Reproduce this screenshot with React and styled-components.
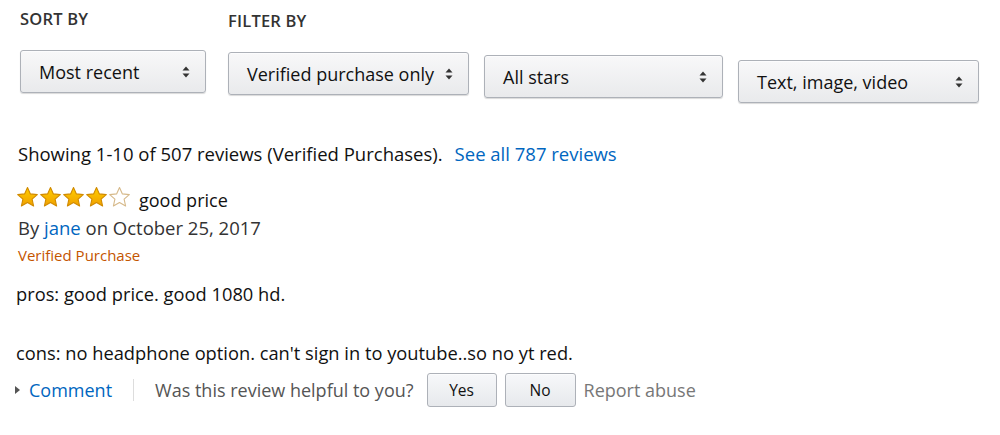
import React from "react";
import styled, { createGlobalStyle } from "styled-components";

const GlobalStyle = createGlobalStyle`
  body {
    margin: 0;
    background: #fff;
    font-family: "Open Sans", "Liberation Sans", sans-serif;
    color: #111;
  }
`;

const SPage = styled.div`
  width: 1000px;
  height: 435px;
  padding: 10px 0 0 18px;
  box-sizing: border-box;
  overflow: hidden;
`;

const SControls = styled.div`
  display: flex;
  align-items: flex-start;
`;

const SGroup = styled.div`
  display: flex;
  flex-direction: column;
  margin-top: ${(props) => props.drop || 0}px;
  margin-left: ${(props) => props.left || 0}px;
`;

const SGroupLabel = styled.div`
  font-size: 16.5px;
  font-weight: 600;
  letter-spacing: 0.2px;
  color: #333;
  height: 18px;
  line-height: 18px;
  margin: 0 0 22px 0;
`;

const SDropRow = styled.div`
  display: flex;
  align-items: flex-start;
  gap: 15px;
`;

const SDropdown = styled.div`
  display: flex;
  align-items: center;
  justify-content: space-between;
  box-sizing: border-box;
  width: ${(props) => props.width}px;
  height: 43px;
  margin-top: ${(props) => props.drop || 0}px;
  padding: 0 15px 0 18px;
  background: linear-gradient(to bottom, #f8f8f9, #e9eaec);
  border: 1px solid #adb1b8;
  border-radius: 3px;
  box-shadow: 0 1px 0 rgba(255, 255, 255, 0.6) inset, 0 1px 1px rgba(0, 0, 0, 0.15);
  font-size: 18px;
  color: #111;
`;

const SArrows = styled.svg`
  width: 8px;
  height: 12px;
  flex: none;
`;

const SummaryLine = styled.div`
  margin-top: 40px;
  font-size: 18.5px;
  line-height: 22px;
  display: flex;
  gap: 12px;
  align-items: baseline;
`;

const SLink = styled.span`
  color: #0066c0;
`;

const SReview = styled.div`
  margin-top: 20px;
`;

const STitleRow = styled.div`
  display: flex;
  align-items: center;
  gap: 8px;
  height: 24px;
  font-size: 18px;
`;

const STitleText = styled.span`
  margin-top: 5px;
`;

const SStars = styled.div`
  display: flex;
  margin-left: -2px;
`;

const SByline = styled.div`
  margin-top: 8px;
  font-size: 18.5px;
  line-height: 22px;
  color: #333;
`;

const SVerified = styled.div`
  margin-top: 7px;
  font-size: 15px;
  line-height: 18px;
  color: #c45500;
`;

const SBody = styled.p`
  margin: ${(props) => props.top}px 0 0 -2px;
  font-size: 18.3px;
  line-height: 22px;
  color: #111;
`;

const SActions = styled.div`
  display: flex;
  align-items: center;
  height: 34px;
  margin-top: 9px;
  font-size: 18px;
  color: #555;
`;

const SCaret = styled.span`
  width: 0;
  height: 0;
  border-left: 5px solid #555;
  border-top: 4px solid transparent;
  border-bottom: 4px solid transparent;
  margin: 0 9px 0 -3px;
`;

const SDivider = styled.span`
  width: 1px;
  height: 22px;
  background: #ddd;
  margin: 0 21px;
`;

const SVoteButton = styled.button`
  box-sizing: border-box;
  width: ${(props) => props.width}px;
  height: 34px;
  margin-left: ${(props) => props.gap}px;
  background: linear-gradient(to bottom, #f7f8fa, #e7e9ec);
  border: 1px solid #adb1b8;
  border-radius: 3px;
  box-shadow: 0 1px 0 rgba(255, 255, 255, 0.6) inset;
  font-family: inherit;
  font-size: 15.5px;
  color: #111;
`;

const SReport = styled.span`
  margin-left: 8px;
  color: #777;
`;

const Arrows = () => (
  <SArrows viewBox="0 0 8 12">
    <path d="M4 0.5 L7.5 4.5 H0.5 Z" fill="#333" />
    <path d="M4 11.5 L7.5 7.5 H0.5 Z" fill="#333" />
  </SArrows>
);

const STAR = "M11 1.5 L13.9 7.9 L20.8 8.6 L15.6 13.2 L17.1 20 L11 16.5 L4.9 20 L6.4 13.2 L1.2 8.6 L8.1 7.9 Z";

const Star = ({ filled }) => (
  <svg width="23" height="22" viewBox="0 0 22 22">
    <defs>
      <linearGradient id="gold" x1="0" y1="0" x2="0" y2="1">
        <stop offset="0" stopColor="#ffce00" />
        <stop offset="1" stopColor="#f0a000" />
      </linearGradient>
    </defs>
    <path
      d={STAR}
      fill={filled ? "url(#gold)" : "#fff"}
      stroke={filled ? "#d08a00" : "#d6b98a"}
      strokeWidth="1.1"
      strokeLinejoin="round"
    />
  </svg>
);

const Dropdown = ({ width, drop, children }) => (
  <SDropdown width={width} drop={drop}>
    <span>{children}</span>
    <Arrows />
  </SDropdown>
);

export default function App() {
  return (
    <SPage>
      <GlobalStyle />
      <SControls>
        <SGroup left={2}>
          <SGroupLabel>SORT BY</SGroupLabel>
          <Dropdown width={186}>Most recent</Dropdown>
        </SGroup>
        <SGroup drop={2} left={22}>
          <SGroupLabel>FILTER BY</SGroupLabel>
          <SDropRow>
            <Dropdown width={241}>Verified purchase only</Dropdown>
            <Dropdown width={239} drop={3}>All stars</Dropdown>
            <Dropdown width={241} drop={8}>Text, image, video</Dropdown>
          </SDropRow>
        </SGroup>
      </SControls>

      <SummaryLine>
        <span>Showing 1-10 of 507 reviews (Verified Purchases).</span>
        <SLink>See all 787 reviews</SLink>
      </SummaryLine>

      <SReview>
        <STitleRow>
          <SStars>
            {[1, 2, 3, 4, 5].map((n) => (
              <Star key={n} filled={n <= 4} />
            ))}
          </SStars>
          <STitleText>good price</STitleText>
        </STitleRow>
        <SByline>
          By <SLink>jane</SLink> on October 25, 2017
        </SByline>
        <SVerified>Verified Purchase</SVerified>
        <SBody top={19}>pros: good price. good 1080 hd.</SBody>
        <SBody top={37}>cons: no headphone option. can't sign in to youtube..so no yt red.</SBody>
        <SActions>
          <SCaret />
          <SLink>Comment</SLink>
          <SDivider />
          <span>Was this review helpful to you?</span>
          <SVoteButton width={70} gap={13}>Yes</SVoteButton>
          <SVoteButton width={71} gap={8}>No</SVoteButton>
          <SReport>Report abuse</SReport>
        </SActions>
      </SReview>
    </SPage>
  );
}
